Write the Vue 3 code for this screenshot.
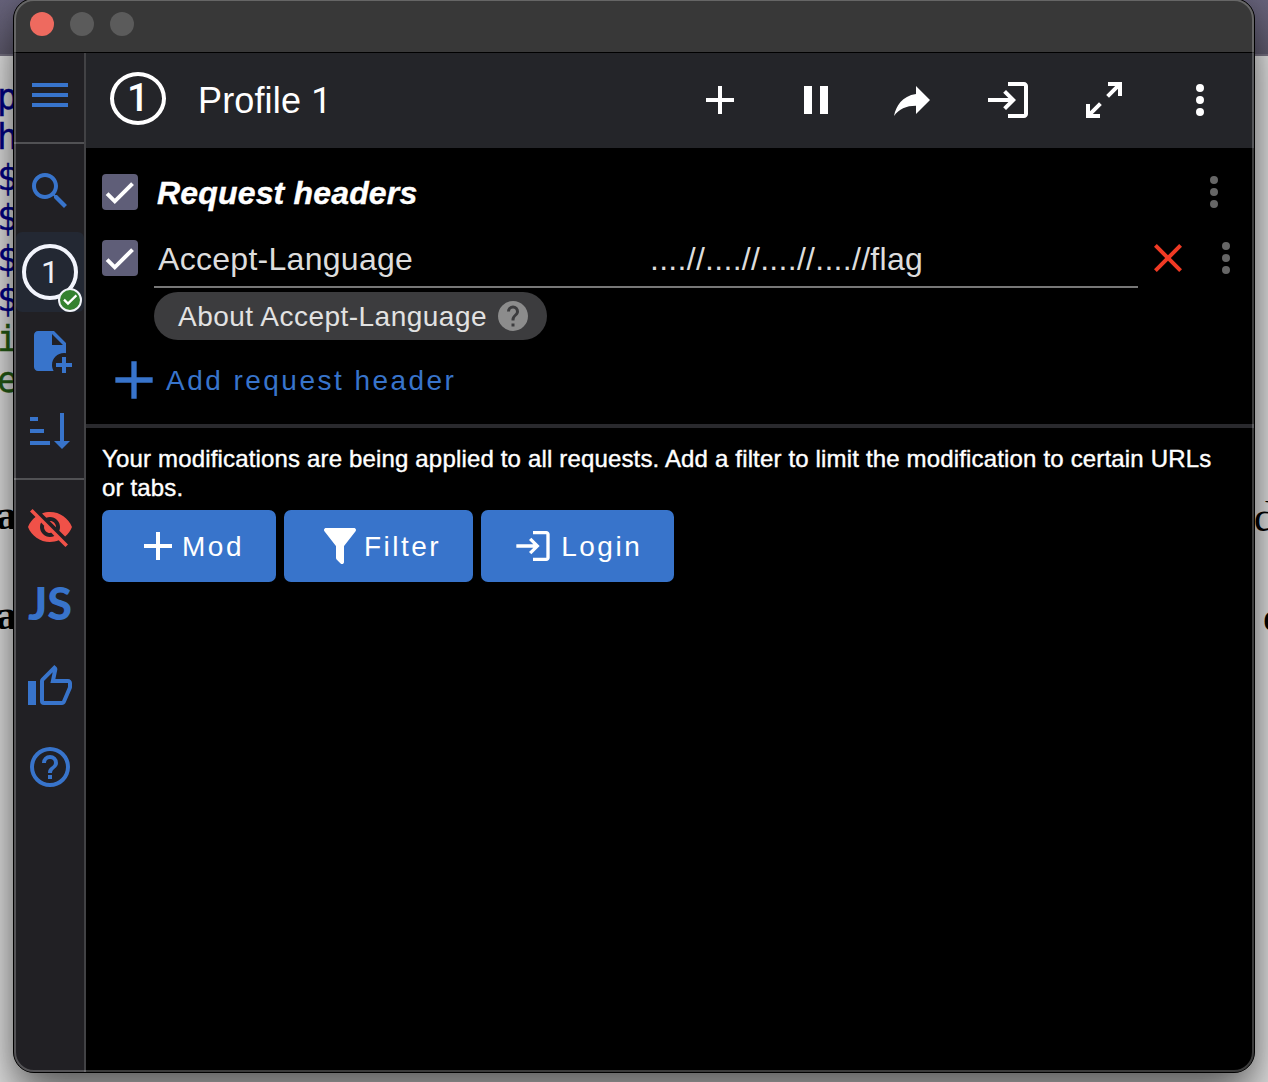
<script setup>
const icons = {
  menu: 'M3 18h18v-2H3v2zm0-5h18v-2H3v2zm0-7v2h18V6H3z',
  search: 'M15.5 14h-.79l-.28-.27C15.41 12.59 16 11.11 16 9.5 16 5.91 13.09 3 9.5 3S3 5.91 3 9.5 5.91 16 9.5 16c1.61 0 3.09-.59 4.23-1.57l.27.28v.79l5 4.99L20.49 19l-4.99-5zm-6 0C7.01 14 5 11.99 5 9.5S7.01 5 9.5 5 14 7.01 14 9.5 11.99 14 9.5 14z',
  filePlus: 'M14 2H6C4.89 2 4 2.89 4 4V20C4 21.11 4.89 22 6 22H13.81C13.28 21.09 13 20.05 13 19C13 15.69 15.69 13 19 13C19.34 13 19.67 13.03 20 13.08V8L14 2M13 9V3.5L18.5 9H13M23 20H20V23H18V20H15V18H18V15H20V18H23V20Z',
  sort: 'M19 17H22L18 21L14 17H17V3H19V17M2 17H12V19H2V17M6 5V7H2V5H6M2 11H9V13H2V11Z',
  eyeOff: 'M12 7c2.76 0 5 2.24 5 5 0 .65-.13 1.26-.36 1.83l2.92 2.92c1.51-1.26 2.7-2.89 3.43-4.75-1.73-4.39-6-7.5-11-7.5-1.4 0-2.74.25-3.98.7l2.16 2.16C10.74 7.13 11.35 7 12 7zM2 4.27l2.28 2.28.46.46C3.08 8.3 1.78 10.02 1 12c1.73 4.39 6 7.5 11 7.5 1.55 0 3.03-.3 4.38-.84l.42.42L19.73 22 21 20.73 3.27 3 2 4.27zM7.53 9.8l1.55 1.55c-.05.21-.08.43-.08.65 0 1.66 1.34 3 3 3 .22 0 .44-.03.65-.08l1.55 1.55c-.67.33-1.41.53-2.2.53-2.76 0-5-2.24-5-5 0-.79.2-1.53.53-2.2zm4.31-.78l3.15 3.15.02-.16c0-1.66-1.34-3-3-3l-.17.01z',
  thumb: 'M5,9V21H1V9H5M9,21A2,2 0 0,1 7,19V9C7,8.45 7.22,7.95 7.59,7.59L14.17,1L15.23,2.06C15.5,2.33 15.67,2.7 15.67,3.11L15.64,3.43L14.69,8H21C22.11,8 23,8.9 23,10V12C23,12.26 22.95,12.5 22.86,12.73L19.84,19.78C19.54,20.5 18.83,21 18,21H9M9,19H18.03L21,12V10H12.21L13.34,4.68L9,9.03V19Z',
  helpOutline: 'M11,18H13V16H11V18M12,2A10,10 0 0,0 2,12A10,10 0 0,0 12,22A10,10 0 0,0 22,12A10,10 0 0,0 12,2M12,20C7.59,20 4,16.41 4,12C4,7.59 7.59,4 12,4C16.41,4 20,7.59 20,12C20,16.41 16.41,20 12,20M12,6A4,4 0 0,0 8,10H10A2,2 0 0,1 12,8A2,2 0 0,1 14,10C14,12 11,11.75 11,15H13C13,12.75 16,12.5 16,10A4,4 0 0,0 12,6Z',
  help: 'M15.07,11.25L14.17,12.17C13.45,12.89 13,13.5 13,15H11V14.5C11,13.39 11.45,12.39 12.17,11.67L13.41,10.41C13.78,10.05 14,9.55 14,9C14,7.89 13.1,7 12,7A2,2 0 0,0 10,9H8A4,4 0 0,1 12,5A4,4 0 0,1 16,9C16,9.88 15.64,10.67 15.07,11.25M13,19H11V17H13M12,2A10,10 0 0,0 2,12A10,10 0 0,0 12,22A10,10 0 0,0 22,12C22,6.47 17.5,2 12,2Z',
  plus: 'M19 13H13V19H11V13H5V11H11V5H13V11H19V13Z',
  pause: 'M14 19H18V5H14M6 19H10V5H6V19Z',
  share: 'M21,12L14,5V9C7,10 4,15 3,20C5.5,16.5 9,14.9 14,14.9V19L21,12Z',
  login: 'M11 7L9.6 8.4L12.2 11H2V13H12.2L9.6 15.6L11 17L16 12L11 7M20 19H12V21H20C21.1 21 22 20.1 22 19V5C22 3.9 21.1 3 20 3H12V5H20V19Z',
  expand: 'M10,21V19H6.41L10.91,14.5L9.5,13.09L5,17.59V14H3V21H10M14.5,10.91L19,6.41V10H21V3H14V5H17.59L13.09,9.5L14.5,10.91Z',
  dots: 'M12,16A2,2 0 0,1 14,18A2,2 0 0,1 12,20A2,2 0 0,1 10,18A2,2 0 0,1 12,16M12,10A2,2 0 0,1 14,12A2,2 0 0,1 12,14A2,2 0 0,1 10,12A2,2 0 0,1 12,10M12,4A2,2 0 0,1 14,6A2,2 0 0,1 12,8A2,2 0 0,1 10,6A2,2 0 0,1 12,4Z',
  close: 'M19,6.41L17.59,5L12,10.59L6.41,5L5,6.41L10.59,12L5,17.59L6.41,19L12,13.41L17.59,19L19,17.59L13.41,12L19,6.41Z',
  filter: 'M14,12V19.88C14.04,20.18 13.94,20.5 13.71,20.71C13.32,21.1 12.69,21.1 12.3,20.71L10.29,18.7C10.06,18.47 9.96,18.16 10,17.87V12H9.97L4.21,4.62C3.87,4.19 3.95,3.56 4.38,3.22C4.57,3.08 4.78,3 5,3V3H19V3C19.22,3 19.43,3.08 19.62,3.22C20.05,3.56 20.13,4.19 19.79,4.62L14.03,12H14Z',
}
const toolbar = ['plus', 'pause', 'share', 'login', 'expand', 'dots']
const code = ['p', 'h', '$', '$', '$', '$', 'i', 'e']
const actions = [
  { icon: 'plus', label: 'Mod' },
  { icon: 'filter', label: 'Filter' },
  { icon: 'login', label: 'Login', small: true },
]
</script>

<template>
  <div class="desktop">
    <div class="page-top"></div>
    <div class="page">
      <div class="code">
        <span v-for="(c, i) in code" :key="i" :class="{ green: i > 5 }">{{ c }}</span>
        <b class="prose">a</b>
        <b class="prose">a</b>
      </div>
      <div class="right-prose"><span>d</span><b>o</b></div>
    </div>

    <div class="window">
      <div class="titlebar"><i class="red"></i><i></i><i></i></div>
      <div class="body">
        <nav class="side">
          <div class="cell top"><svg class="ic" viewBox="0 0 24 24"><path :d="icons.menu" /></svg></div>
          <div class="cell find"><svg class="ic" viewBox="0 0 24 24"><path :d="icons.search" /></svg></div>
          <div class="cell selected">
            <div class="ring">1</div>
            <svg class="badge" viewBox="0 0 24 24">
              <circle cx="12" cy="12" r="11" fill="#34812f" stroke="#f2f4fa" stroke-width="2" />
              <path d="M6 11.6l4 4 8.4-8.2" fill="none" stroke="#fff" stroke-width="2.2" />
            </svg>
          </div>
          <div class="cell file"><svg class="ic" viewBox="0 0 24 24"><path :d="icons.filePlus" /></svg></div>
          <div class="cell sort"><svg class="ic" viewBox="0 0 24 24"><path :d="icons.sort" /></svg></div>
          <div class="cell eye"><svg class="ic" viewBox="0 0 24 24"><path :d="icons.eyeOff" /></svg></div>
          <div class="cell js">JS</div>
          <div class="cell"><svg class="ic" viewBox="0 0 24 24"><path :d="icons.thumb" /></svg></div>
          <div class="cell"><svg class="ic" viewBox="0 0 24 24"><path :d="icons.helpOutline" /></svg></div>
        </nav>

        <main class="main">
          <header class="head">
            <div class="oval">1</div>
            <div class="title">Profile <span>1</span></div>
            <div class="tools">
              <svg v-for="t in toolbar" :key="t" class="ic" viewBox="0 0 24 24"><path :d="icons[t]" /></svg>
            </div>
          </header>

          <section class="mods">
            <div class="row row-title">
              <div class="check"><svg viewBox="0 0 24 24"><path d="M1.73 12.91 8.1 19.28 22.79 4.59" /></svg></div>
              <div class="group">Request headers</div>
              <svg class="ic more" viewBox="0 0 24 24"><path :d="icons.dots" /></svg>
            </div>
            <div class="row row-item">
              <div class="check"><svg viewBox="0 0 24 24"><path d="M1.73 12.91 8.1 19.28 22.79 4.59" /></svg></div>
              <div class="fields">
                <div class="name">Accept-Language</div>
                <div class="value">....//....//....//....//flag</div>
              </div>
              <svg class="ic close" viewBox="0 0 24 24"><path :d="icons.close" /></svg>
              <svg class="ic more" viewBox="0 0 24 24"><path :d="icons.dots" /></svg>
            </div>
            <div class="chip">
              <span>About Accept-Language</span>
              <svg viewBox="0 0 24 24"><path :d="icons.help" /></svg>
            </div>
            <div class="add">
              <svg viewBox="0 0 24 24"><path :d="icons.plus" /></svg>
              <span>Add request header</span>
            </div>
          </section>

          <section class="foot">
            <p>Your modifications are being applied to all requests. Add a filter to limit the modification to certain URLs<br />or tabs.</p>
            <div class="btns">
              <div v-for="a in actions" :key="a.label" class="btn">
                <svg class="ic" :class="{ small: a.small }" viewBox="0 0 24 24"><path :d="icons[a.icon]" /></svg>
                <span>{{ a.label }}</span>
              </div>
            </div>
          </section>
        </main>
      </div>
    </div>
  </div>
</template>

<style>
body { margin: 0; overflow: hidden; }
</style>

<style scoped>
.desktop {
  position: relative;
  width: 1268px;
  height: 1082px;
  overflow: hidden;
  font-family: "Liberation Sans", Arial, sans-serif;
}
.desktop * { box-sizing: border-box; }
.page-top { height: 56px; background: linear-gradient(#66627a, #5f5b6e 54px, #777384 54px); }
.page {
  height: 1026px;
  background: #e6e6e6;
  display: flex;
  justify-content: space-between;
}
.code {
  width: 14px;
  padding-top: 21px;
  display: flex;
  flex-direction: column;
  font: 35px/41px "DejaVu Sans Mono", monospace;
  color: #000088;
}
.code span { height: 40.4px; margin-left: -3px; -webkit-text-stroke: 0.4px currentColor; }
.code .green { color: #245c14; }
.code .prose {
  font: bold 42px/46px "Liberation Serif", serif;
  color: #000;
  margin: 92px 0 0 -4px;
}
.code .prose + .prose { margin-top: 54px; }
.right-prose {
  width: 14px;
  padding-top: 438px;
  display: flex;
  flex-direction: column;
  gap: 54px;
  font: 42px/46px "Liberation Serif", serif;
}
.right-prose b { margin-left: 9px; }

.window {
  position: absolute;
  left: 13px;
  top: -2px;
  width: 1242px;
  height: 1075px;
  border: 1px solid #000;
  border-radius: 21px;
  background: #000;
  display: flex;
  flex-direction: column;
  box-shadow: 0 30px 50px rgba(0, 0, 0, 0.55), 0 0 20px rgba(0, 0, 0, 0.16);
}
.window::after {
  content: "";
  position: absolute;
  inset: 0;
  border: 2px solid rgba(255, 255, 255, 0.23);
  border-radius: 20px;
  pointer-events: none;
}
.titlebar {
  height: 54px;
  flex: none;
  display: flex;
  gap: 16px;
  padding: 13px 0 0 16px;
  background: #383838;
  border-bottom: 1px solid #000;
  border-radius: 20px 20px 0 0;
}
.titlebar i { width: 24px; height: 24px; border-radius: 50%; background: #5b5b5b; }
.titlebar .red { background: #ee6a5f; }
.body { flex: 1; display: flex; min-height: 0; }
.ic { width: 48px; height: 48px; fill: currentColor; flex: none; display: block; }

.side {
  width: 72px;
  flex: none;
  background: #212024;
  border-right: 2px solid #424245;
  border-radius: 0 0 0 20px;
  color: #3874cb;
}
.cell { height: 80px; display: flex; align-items: center; justify-content: center; padding-left: 2px; }
.top { height: 91px; border-bottom: 2px solid #515154; padding-bottom: 5px; }
.find { height: 88px; padding-bottom: 0; padding-top: 5px; }
.selected {
  position: relative;
  height: 80px;
  padding-left: 0;
  margin-left: 2px;
  background: #232833;
  border-radius: 6px;
}
.file { padding-bottom: 2px; }
.ring {
  width: 56px;
  height: 56px;
  border: 4px solid #f2f4fc;
  border-radius: 50%;
  color: #eef0f6;
  font: 32px/48px "Roboto", sans-serif;
  text-align: center;
}
.badge { position: absolute; left: 42px; top: 56px; width: 24px; height: 24px; }
.sort { height: 88px; padding-bottom: 8px; border-bottom: 2px solid #515154; }
.sort + .cell { margin-top: 7px; }
.eye { color: #f05148; }
.js { font: 900 45px/48px "Lato", sans-serif; padding-bottom: 8px; }

.main { flex: 1; min-width: 0; }
.head {
  height: 95px;
  display: flex;
  align-items: center;
  padding: 0 30px 0 24px;
  background: #242529;
  color: #fff;
}
.oval {
  width: 56px;
  height: 53px;
  border: 4px solid #fff;
  border-radius: 50%;
  margin-top: -4px;
  font: 500 39px/44px "Roboto", sans-serif;
  text-align: center;
}
.title { margin-left: 32px; font-size: 36px; line-height: 44px; letter-spacing: 0.15px; }
.title span { font-family: "Roboto", sans-serif; }
.tools { margin: -1px 0 0 auto; display: flex; gap: 48px; }

.mods { height: 280px; padding: 0 0 0 16px; border-bottom: 4px solid #29292d; }
.row { display: flex; align-items: center; }
.row-title { height: 88px; }
.row-item { height: 52px; align-items: flex-start; }
.row-item .check { margin-top: 4px; }
.check {
  width: 36px;
  height: 36px;
  flex: none;
  border-radius: 4px;
  background: #5f5e78;
  display: flex;
  align-items: center;
  justify-content: center;
}
.check svg { width: 29px; height: 29px; fill: none; stroke: #fff; stroke-width: 3.3; margin-left: -1px; }
.group {
  margin-left: 19px;
  padding-top: 2px;
  flex: 1;
  color: #fff;
  font: italic bold 32px/40px "Liberation Sans", sans-serif;
  letter-spacing: 0.17px;
  -webkit-text-stroke: 0.4px #fff;
}
.more { color: #666; }
.row-title .more { margin-right: 16px; }
.fields {
  margin-left: 16px;
  width: 984px;
  height: 52px;
  border-bottom: 2px solid #777;
  display: flex;
  padding-left: 4px;
  font-size: 32px;
  line-height: 46px;
  letter-spacing: 0.29px;
  color: #ddd;
}
.name { width: 492px; }
.close { color: #f03a24; margin-left: 6px; margin-top: -2px; }
.row-item .more { margin-left: 10px; margin-top: -2px; }
.chip {
  width: 393px;
  height: 48px;
  margin: 4px 0 0 52px;
  border-radius: 24px;
  background: #3c3c3e;
  color: #e2e2e2;
  display: flex;
  align-items: center;
  padding-left: 24px;
  font-size: 28px;
  letter-spacing: 0.48px;
}
.chip span { padding-top: 2px; }
.chip svg { width: 36px; height: 36px; fill: #8c8c8c; margin-left: 8px; }
.add {
  height: 80px;
  display: flex;
  align-items: center;
  color: #3874cb;
  font-size: 28px;
  letter-spacing: 2.47px;
}
.add span { padding-top: 2px; }
.add svg { width: 64px; height: 64px; fill: currentColor; }

.foot { padding: 16px 16px 0; color: #fff; }
.foot p {
  margin: 0;
  font-size: 24px;
  line-height: 29px;
  letter-spacing: 0.163px;
  white-space: nowrap;
  -webkit-text-stroke: 0.4px #fff;
}
.btns { display: flex; gap: 8px; margin-top: 8px; }
.btn {
  height: 72px;
  padding: 0 32px;
  border-radius: 7px;
  background: #3874cb;
  display: flex;
  align-items: center;
  font-size: 28px;
  letter-spacing: 2.5px;
}
.btn span { padding-top: 2px; }
.btn .small { width: 40px; height: 40px; margin-right: 8px; }
</style>
